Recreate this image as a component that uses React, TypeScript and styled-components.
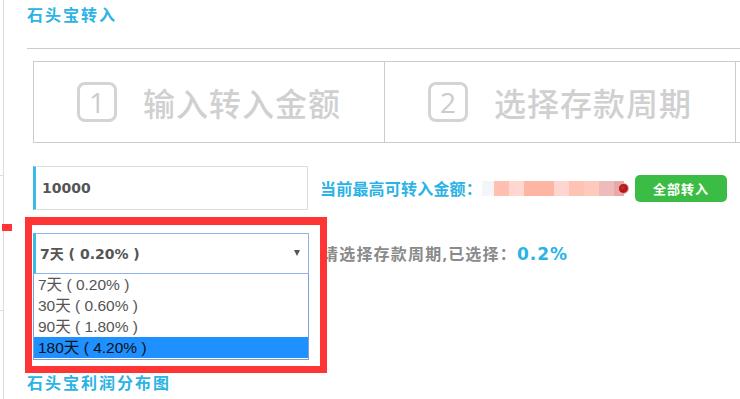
import React from 'react';
import styled, { createGlobalStyle } from 'styled-components';

const cjk = `"Noto Sans", "Noto Sans CJK SC", sans-serif`;
const wide = `"DejaVu Sans", "Noto Sans CJK SC", sans-serif`;
const narrow = `"Liberation Sans", "Noto Sans CJK SC", sans-serif`;

const colors = {
  blue: '#2cb3e6',
  accent: '#3bb9e8',
  line: '#cccccc',
  faint: '#d0d0d0',
  text: '#555555',
  grey: '#8a8a8a',
  green: '#3bbd45',
  mark: '#ff3434',
  focus: '#8fb3ee',
  picked: '#1e90ff',
};

const GlobalStyle = createGlobalStyle`
  html, body {
    margin: 0;
    padding: 0;
    background: #ffffff;
    font-family: ${cjk};
    overflow: hidden;
  }
`;

const Page = styled.div`
  position: relative;
  display: flex;
  flex-direction: row;
  width: 740px;
  height: 399px;
  overflow: hidden;
`;

const Rail = styled.div`
  display: flex;
  flex-direction: column;
  width: 3px;
  border-right: 1px solid #dddddd;
  flex-shrink: 0;
`;

const Tick = styled.span<{ $gap: number }>`
  display: block;
  width: 3px;
  height: 1px;
  margin-top: ${(p) => p.$gap}px;
  background: #dddddd;
`;

const Marker = styled.span`
  position: absolute;
  left: 2px;
  top: 224px;
  width: 10px;
  height: 7px;
  background: ${colors.mark};
`;

const Content = styled.main`
  flex: 1;
  min-width: 0;
  padding-left: 23px;
  overflow: hidden;
`;

const Heading = styled.h2<{ $top: number }>`
  margin: ${(p) => p.$top}px 0 0;
  font-size: 16px;
  line-height: 20px;
  letter-spacing: 2px;
  font-weight: bold;
  color: ${colors.blue};
`;

const Rule = styled.hr`
  margin: 23px 0 0;
  border: 0;
  border-top: 1px solid ${colors.line};
`;

const Form = styled.div`
  padding-left: 6px;
`;

const Steps = styled.div`
  display: flex;
  flex-direction: row;
  width: 1100px;
  height: 80px;
  margin-top: 12px;
  border: 1px solid ${colors.line};
`;

const Step = styled.div`
  flex: 0 0 350px;
  display: flex;
  align-items: center;
  justify-content: center;
  gap: 26px;
  border-right: 1px solid ${colors.line};
`;

const StepNumber = styled.span`
  display: flex;
  align-items: center;
  justify-content: center;
  box-sizing: border-box;
  width: 40px;
  height: 40px;
  border: 3px solid #d4d4d4;
  border-radius: 8px;
  font-family: "Open Sans", sans-serif;
  font-weight: 400;
  font-size: 28px;
  color: #cccccc;
`;

const StepLabel = styled.span`
  font-size: 32px;
  font-weight: 500;
  letter-spacing: 1px;
  color: ${colors.faint};
`;

const Row = styled.div`
  display: flex;
  flex-direction: row;
  align-items: center;
  margin-top: 23px;
`;

const Field = styled.div`
  box-sizing: border-box;
  display: flex;
  align-items: center;
  width: 275px;
  height: 44px;
  padding-left: 6px;
  border: 1px solid #dddddd;
  border-left: 3px solid ${colors.accent};
  font-family: ${wide};
  font-weight: bold;
  font-size: 14px;
  color: ${colors.text};
`;

const Hint = styled.span`
  margin-left: 12px;
  font-size: 16px;
  letter-spacing: 0.2px;
  font-weight: bold;
  color: ${colors.blue};
`;

const Masked = styled.div`
  display: flex;
  flex-direction: row;
  align-items: center;
  height: 15px;
`;

const Pixel = styled.span<{ $w: number; $c: string }>`
  display: block;
  width: ${(p) => p.$w}px;
  height: 15px;
  background: ${(p) => p.$c};
`;

const Dot = styled.span`
  display: block;
  width: 9px;
  height: 9px;
  margin-left: -6px;
  border-radius: 50%;
  border: 1px solid #e9a0a0;
  background: radial-gradient(circle at 40% 40%, #c0302a 0%, #b01010 60%, #f2c4c4 100%);
`;

const AllButton = styled.button`
  margin-left: 6px;
  width: 92px;
  height: 27px;
  border: 0;
  border-radius: 5px;
  background: ${colors.green};
  color: #ffffff;
  font-family: ${cjk};
  font-size: 13px;
  font-weight: bold;
  letter-spacing: 1px;
  padding: 0;
`;

const PickRow = styled.div`
  display: flex;
  flex-direction: row;
  align-items: flex-start;
  margin-top: 23px;
`;

const Picker = styled.div`
  position: relative;
  width: 276px;
`;

const Highlight = styled.span`
  position: absolute;
  left: -8px;
  top: -16px;
  width: 302px;
  height: 156px;
  box-sizing: border-box;
  border: 7px solid ${colors.mark};
  border-top-width: 8px;
  pointer-events: none;
  z-index: 2;
`;

const Current = styled.div`
  box-sizing: border-box;
  display: flex;
  align-items: center;
  justify-content: space-between;
  height: 41px;
  padding: 0 8px 2px 4px;
  border: 1px solid ${colors.focus};
  border-left: 3px solid ${colors.accent};
  font-family: ${wide};
  font-weight: bold;
  font-size: 14px;
  color: ${colors.text};
`;

const Caret = styled.span`
  width: 0;
  height: 0;
  border-left: 3.5px solid transparent;
  border-right: 3.5px solid transparent;
  border-top: 6px solid #555555;
`;

const List = styled.ul`
  margin: 0;
  padding: 0 0 1px;
  list-style: none;
  border: 1px solid #7f9fdc;
  border-top: 0;
`;

const Option = styled.li<{ $picked?: boolean }>`
  height: 21px;
  line-height: 21px;
  padding-left: 4px;
  font-family: ${narrow};
  font-size: 15.5px;
  color: ${(p) => (p.$picked ? '#111111' : colors.text)};
  background: ${(p) => (p.$picked ? colors.picked : 'transparent')};
`;

const Chosen = styled.span`
  margin-left: 13px;
  line-height: 42px;
  font-size: 16px;
  letter-spacing: 1.2px;
  font-weight: bold;
  color: ${colors.grey};
`;

const Rate = styled.span`
  font-family: ${wide};
  font-size: 17px;
  letter-spacing: 1px;
  color: ${colors.blue};
`;

const steps = ['输入转入金额', '选择存款周期'];
const periods = ['7天 ( 0.20% )', '30天 ( 0.60% )', '90天 ( 1.80% )', '180天 ( 4.20% )'];
const masked: [number, string][] = [
  [12, '#f3f5f6'],
  [15, '#ffc0b1'],
  [15, '#ffd7d0'],
  [30, '#ffb5a4'],
  [15, '#ffd6cf'],
  [15, '#ffc3b3'],
  [15, '#ffcabe'],
  [15, '#ecbbba'],
  [10, '#e8aaa8'],
];

const App = () => {
  return (
    <Page>
      <GlobalStyle />
      <Rail>
        <Tick $gap={175} />
        <Tick $gap={134} />
      </Rail>
      <Marker />
      <Content>
        <Heading $top={5}>石头宝转入</Heading>
        <Rule />
        <Form>
          <Steps>
            {steps.map((label, i) => (
              <Step key={label}>
                <StepNumber>{i + 1}</StepNumber>
                <StepLabel>{label}</StepLabel>
              </Step>
            ))}
            <Step />
          </Steps>
          <Row>
            <Field>10000</Field>
            <Hint>当前最高可转入金额：</Hint>
            <Masked>
              {masked.map(([w, c], i) => (
                <Pixel key={i} $w={w} $c={c} />
              ))}
              <Dot />
            </Masked>
            <AllButton>全部转入</AllButton>
          </Row>
          <PickRow>
            <Picker>
              <Highlight />
              <Current>
                {periods[0]}
                <Caret />
              </Current>
              <List>
                {periods.map((p, i) => (
                  <Option key={p} $picked={i === periods.length - 1}>
                    {p}
                  </Option>
                ))}
              </List>
            </Picker>
            <Chosen>
              请选择存款周期,已选择：<Rate>0.2%</Rate>
            </Chosen>
          </PickRow>
        </Form>
        <Heading $top={13}>石头宝利润分布图</Heading>
      </Content>
    </Page>
  );
};

export default App;
